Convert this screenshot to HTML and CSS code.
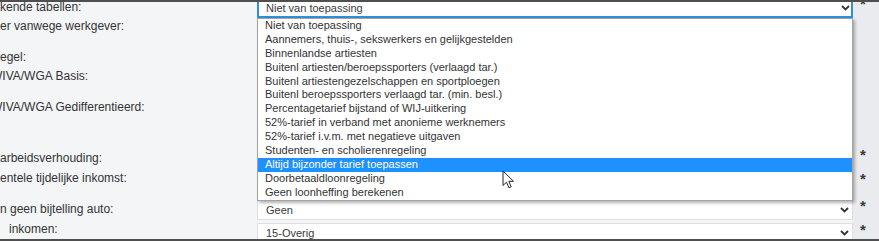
FILE: index.html
```html
<!DOCTYPE html>
<html>
<head>
  <title>Loonheffing instellingen</title>
  <link rel="stylesheet" href="styles.css">
</head>
<body>
  <div class="topbar"></div>
  <div class="page">
    <div class="form">
      <div class="row first">
        <label class="lbl">kende tabellen:</label>
        <div class="field">
          <div class="select focus">
            <span>Niet van toepassing</span>
            <svg class="chevron" width="9" height="6" viewBox="0 0 9 6"><path d="M1 1 L4.5 4.5 L8 1" /></svg>
          </div>
        </div>
        <span class="req">*</span>
      </div>
      <div class="row tall">
        <label class="lbl">er vanwege werkgever:</label>
        <div class="field"></div>
        <span class="req"></span>
      </div>
      <div class="row">
        <label class="lbl">egel:</label>
        <div class="field"></div>
        <span class="req"></span>
      </div>
      <div class="row tall">
        <label class="lbl"><span class="cut">W</span>IVA/WGA Basis:</label>
        <div class="field"></div>
        <span class="req"></span>
      </div>
      <div class="row xl">
        <label class="lbl"><span class="cut">W</span>IVA/WGA Gedifferentieerd:</label>
        <div class="field"></div>
        <span class="req"></span>
      </div>
      <div class="row mid">
        <label class="lbl">arbeidsverhouding:</label>
        <div class="field"></div>
        <span class="req">*</span>
      </div>
      <div class="row tall">
        <label class="lbl">entele tijdelijke inkomst:</label>
        <div class="field"></div>
        <span class="req low">*</span>
      </div>
      <div class="row mid">
        <label class="lbl">n geen bijtelling auto:</label>
        <div class="field">
          <div class="select">
            <span>Geen</span>
            <svg class="chevron" width="9" height="6" viewBox="0 0 9 6"><path d="M1 1 L4.5 4.5 L8 1" /></svg>
          </div>
        </div>
        <span class="req">*</span>
      </div>
      <div class="row">
        <label class="lbl indent">inkomen:</label>
        <div class="field">
          <div class="select drop">
            <span>15-Overig</span>
            <svg class="chevron" width="9" height="6" viewBox="0 0 9 6"><path d="M1 1 L4.5 4.5 L8 1" /></svg>
          </div>
        </div>
        <span class="req low">*</span>
      </div>
    </div>

    <ul class="dropdown">
      <li>Niet van toepassing</li>
      <li>Aannemers, thuis-, sekswerkers en gelijkgestelden</li>
      <li>Binnenlandse artiesten</li>
      <li>Buitenl artiesten/beroepssporters (verlaagd tar.)</li>
      <li>Buitenl artiestengezelschappen en sportploegen</li>
      <li>Buitenl beroepssporters verlaagd tar. (min. besl.)</li>
      <li>Percentagetarief bijstand of WIJ-uitkering</li>
      <li>52%-tarief in verband met anonieme werknemers</li>
      <li>52%-tarief i.v.m. met negatieve uitgaven</li>
      <li>Studenten- en scholierenregeling</li>
      <li class="active">Altijd bijzonder tarief toepassen</li>
      <li>Doorbetaaldloonregeling</li>
      <li>Geen loonheffing berekenen</li>
    </ul>

    <svg class="cursor" width="13" height="19" viewBox="0 0 13 19">
      <path d="M1 1 L1 15.5 L4.5 12.2 L7 17.8 L9.2 16.8 L6.8 11.3 L11.5 11.3 Z" />
    </svg>
  </div>
  <div class="bottombar"></div>
</body>
</html>
```

FILE: styles.css
```css
body {
  margin: 0;
  padding: 0;
  font-family: "Liberation Sans", Arial, sans-serif;
  color: #333;
  overflow: hidden;
}
.topbar,
.bottombar {
  height: 2px;
  background-color: #4f4f4f;
}
.page {
  position: relative;
  height: 237px;
  overflow: hidden;
  background: linear-gradient(to right, #f4f5f7 853px, #e9ebef 853px);
}
.form {
  margin-top: -2px;
}
.row {
  display: grid;
  grid-template-columns: 257px 596px 26px;
  height: 19px;
}
.row.mid {
  height: 20px;
}
.row.tall {
  height: 31px;
}
.row.xl {
  height: 51px;
}
.lbl {
  font-size: 12px;
  line-height: 14px;
  white-space: nowrap;
  overflow: hidden;
  color: #333;
}
.lbl .cut {
  margin-left: -9px;
}
.lbl.indent {
  padding-left: 9px;
}
.select {
  box-sizing: border-box;
  height: 20px;
  margin-top: -2px;
  display: flex;
  align-items: center;
  justify-content: space-between;
  padding: 0 3px 0 8px;
  background-color: #fff;
  border: 1px solid #dcdee2;
  font-size: 11px;
  color: #3a3a3a;
}
.select.focus {
  border: 2px solid #2f8fd8;
  padding-left: 7px;
  padding-right: 1px;
}
.select.drop {
  margin-top: 1px;
}
.chevron path {
  fill: none;
  stroke: #333;
  stroke-width: 1.8;
}
.req {
  margin-top: -3px;
  padding-left: 7px;
  font-size: 15px;
  font-weight: bold;
  line-height: 14px;
  color: #3a3a3a;
}
.req.low {
  padding-top: 4px;
}
.dropdown {
  position: absolute;
  left: 257px;
  top: 16px;
  width: 596px;
  box-sizing: border-box;
  margin: 0;
  padding: 0;
  list-style: none;
  background-color: #fff;
  border: 1px solid #a3a3a3;
  box-shadow: 2px 2px 3px rgba(0, 0, 0, 0.3);
}
.dropdown li {
  height: 13.9px;
  line-height: 13.9px;
  padding-left: 7px;
  font-size: 11px;
  color: #333;
  white-space: nowrap;
}
.dropdown li.active {
  background-color: #1e90ff;
  color: #fff;
}
.cursor {
  position: absolute;
  left: 502px;
  top: 168px;
}
.cursor path {
  fill: #fff;
  stroke: #222;
  stroke-width: 1;
  stroke-linejoin: round;
}
```
